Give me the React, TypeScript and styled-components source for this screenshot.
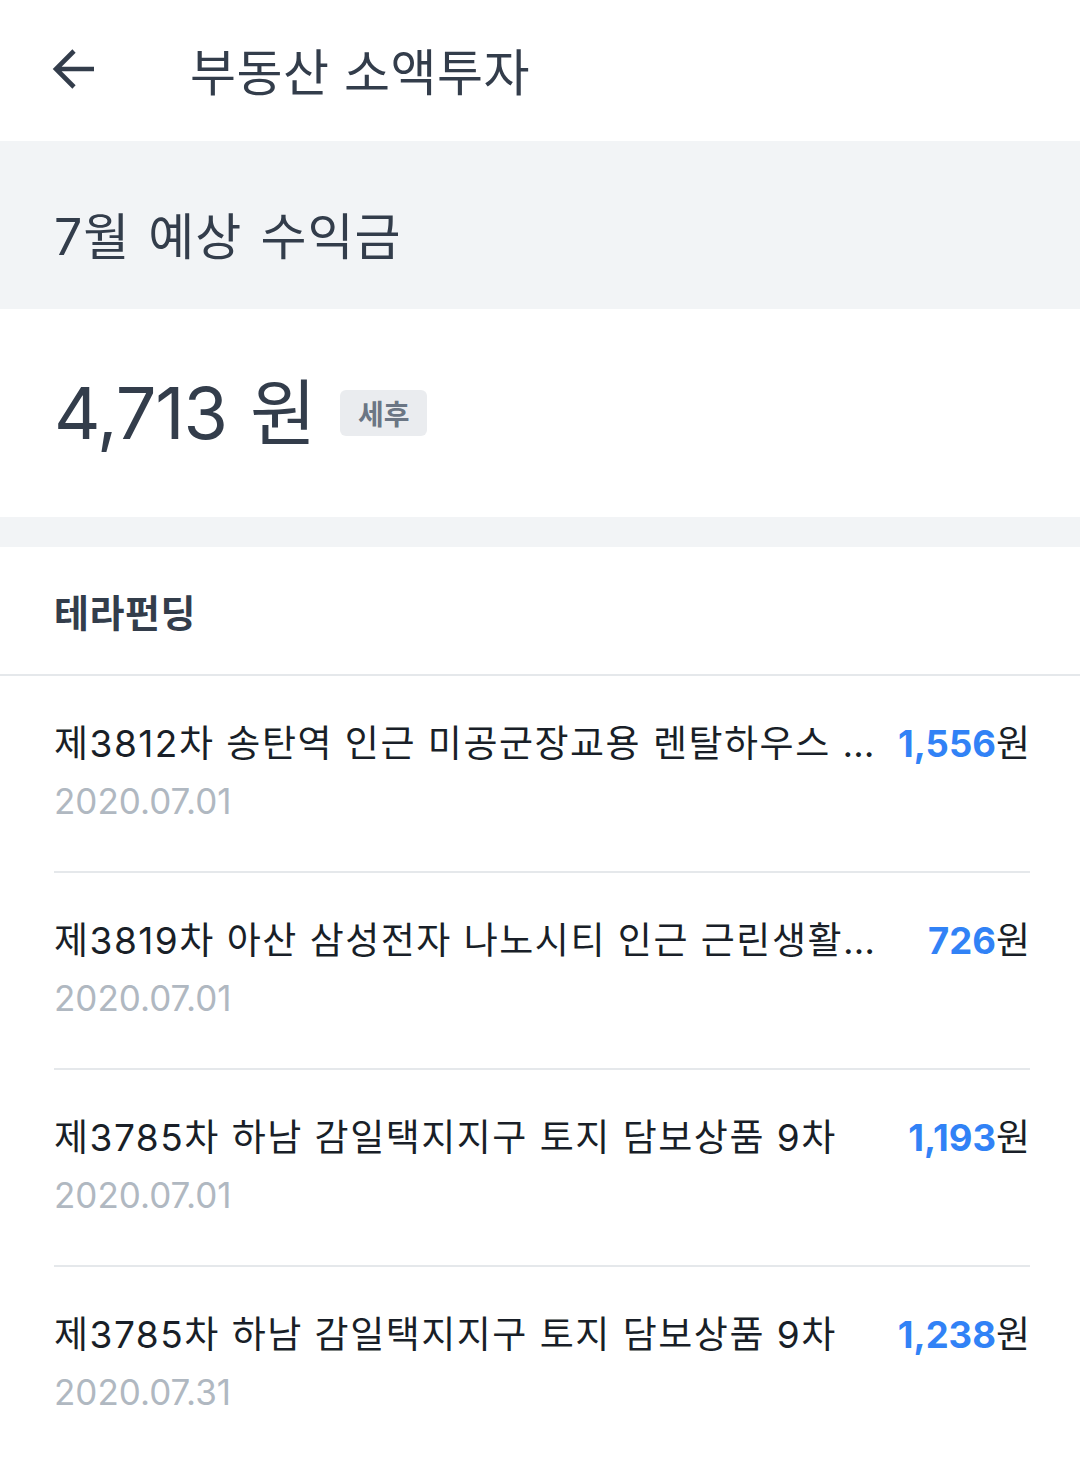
import styled, { createGlobalStyle } from "styled-components";

const GlobalStyle = createGlobalStyle`
  body {
    margin: 0;
    background: #ffffff;
    font-family: "Inter", "Noto Sans CJK KR", sans-serif;
    -webkit-font-smoothing: antialiased;
  }
`;

const items = [
  {
    title: "제3812차 송탄역 인근 미공군장교용 렌탈하우스 임대수익 상품",
    date: "2020.07.01",
    amount: "1,556",
  },
  {
    title: "제3819차 아산 삼성전자 나노시티 인근 근린생활시설 담보상품",
    date: "2020.07.01",
    amount: "726",
  },
  {
    title: "제3785차 하남 감일택지지구 토지 담보상품 9차",
    date: "2020.07.01",
    amount: "1,193",
  },
  {
    title: "제3785차 하남 감일택지지구 토지 담보상품 9차",
    date: "2020.07.31",
    amount: "1,238",
  },
];

export default function App() {
  return (
    <Page>
      <GlobalStyle />
      <Header>
        <BackButton aria-label="뒤로">
          <svg width="44" height="44" viewBox="0 0 44 44" fill="none">
            <path
              d="M43 22H6M23 4L5 22l18 18"
              stroke="#333d4b"
              strokeWidth="4.6"
            />
          </svg>
        </BackButton>
        <HeaderTitle>부동산 소액투자</HeaderTitle>
      </Header>

      <MonthBar>7월 예상 수익금</MonthBar>

      <TotalRow>
        <TotalAmount>
          4,713 <TotalUnit>원</TotalUnit>
        </TotalAmount>
        <TaxBadge>세후</TaxBadge>
      </TotalRow>

      <Band />

      <SectionHeader>테라펀딩</SectionHeader>

      <List>
        {items.map((item, i) => (
          <Item key={i} $last={i === items.length - 1}>
            <TopLine>
              <ItemTitle>{item.title}</ItemTitle>
              <ItemAmount>
                <Blue>{item.amount}</Blue>원
              </ItemAmount>
            </TopLine>
            <ItemDate>{item.date}</ItemDate>
          </Item>
        ))}
      </List>
    </Page>
  );
}

const Page = styled.div`
  width: 1080px;
  min-height: 1480px;
  background: #ffffff;
`;

const Header = styled.header`
  height: 141px;
  display: flex;
  align-items: center;
  padding: 0 0 4px 51px;
  box-sizing: border-box;
`;

const BackButton = styled.button`
  width: 139px;
  height: 44px;
  padding: 0;
  border: none;
  background: none;
  display: flex;
  align-items: center;
  justify-content: flex-start;
  cursor: pointer;
`;

const HeaderTitle = styled.h1`
  margin: 0;
  font-size: 50px;
  font-weight: 400;
  letter-spacing: 0.5px;
  color: #333d4b;
`;

const MonthBar = styled.div`
  height: 168px;
  box-sizing: border-box;
  padding: 16px 0 0 54px;
  background: #f2f4f6;
  display: flex;
  align-items: center;
  font-size: 50px;
  letter-spacing: 1px;
  color: #333d4b;
  word-spacing: 3px;
`;

const TotalRow = styled.div`
  height: 208px;
  display: flex;
  align-items: center;
  padding-left: 54px;
`;

const TotalAmount = styled.div`
  font-size: 72px;
  color: #333d4b;
  letter-spacing: -0.015em;
  line-height: 1;
`;

const TotalUnit = styled.span`
  font-size: 72px;
  letter-spacing: 0;
  margin-left: 4px;
`;

const TaxBadge = styled.span`
  margin-left: 24px;
  width: 87px;
  height: 46px;
  border-radius: 6px;
  background: #eaecef;
  color: #6b7684;
  font-size: 28px;
  font-weight: 700;
  display: flex;
  align-items: center;
  justify-content: center;
`;

const Band = styled.div`
  height: 30px;
  background: #f2f4f6;
`;

const SectionHeader = styled.h2`
  margin: 0;
  height: 127px;
  padding-left: 54px;
  display: flex;
  align-items: center;
  font-size: 38px;
  font-weight: 700;
  letter-spacing: 0.5px;
  color: #333d4b;
  border-bottom: 2px solid #e5e8eb;
`;

const List = styled.ul`
  list-style: none;
  margin: 0;
  padding: 0 50px 0 54px;
`;

const Item = styled.li<{ $last: boolean }>`
  padding: 41px 0 46px;
  border-bottom: ${(p) => (p.$last ? "none" : "2px solid #e5e8eb")};
`;

const TopLine = styled.div`
  display: flex;
  align-items: center;
  height: 48px;
`;

const ItemTitle = styled.div`
  flex: 1;
  min-width: 0;
  font-size: 37px;
  letter-spacing: 1.5px;
  color: #191f28;
  white-space: nowrap;
  overflow: hidden;
  text-overflow: ellipsis;
`;

const ItemAmount = styled.div`
  min-width: 132px;
  margin-left: 10px;
  text-align: right;
  font-size: 37px;
  color: #191f28;
  white-space: nowrap;
`;

const Blue = styled.span`
  color: #3182f6;
  font-weight: 700;
  font-size: 36.5px;
`;

const ItemDate = styled.div`
  margin-top: 12px;
  height: 48px;
  line-height: 48px;
  font-size: 35px;
  color: #b0b8c1;
`;
